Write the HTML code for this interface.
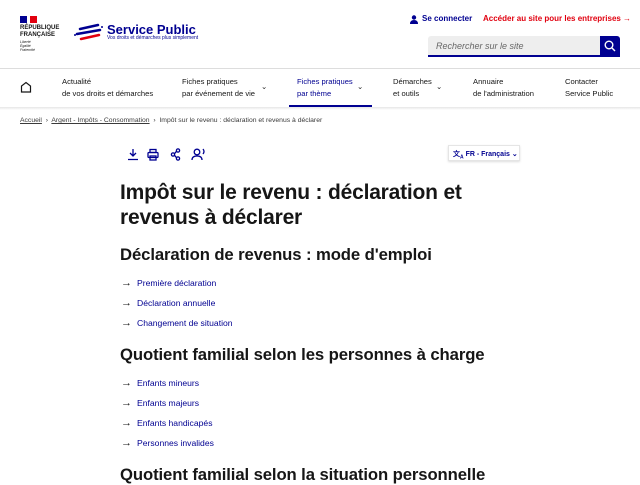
<!DOCTYPE html><html><head><meta charset="utf-8"><style>
*{margin:0;padding:0;box-sizing:border-box}
body{width:640px;height:480px;overflow:hidden;background:#fff;font-family:"Liberation Sans",sans-serif;color:#161616;position:relative}
.a{position:absolute;white-space:nowrap}
.nav{font-size:7.6px;line-height:12px;color:#161616}
.lnk{font-size:8.6px;color:#000091}
.lnk b{font-size:11px;color:#161616;display:inline-block;width:16px;line-height:9px}
.h2{font-size:16.7px;font-weight:bold;letter-spacing:-0.1px}
</style></head><body>
<div class="a" style="left:20px;top:16px;width:7px;height:7px;background:#000091"></div>
<div class="a" style="left:30px;top:16px;width:7px;height:7px;background:#e1000f"></div>
<div class="a" style="left:20px;top:25px;font-size:6px;font-weight:bold;line-height:6.5px">RÉPUBLIQUE<br>FRANÇAISE</div>
<div class="a" style="left:20px;top:40px;font-size:3.5px;font-style:italic;line-height:4px">Liberté<br>Égalité<br>Fraternité</div>
<svg class="a" style="left:74px;top:22px" width="30" height="22" viewBox="0 0 30 22"><path d="M6 7 L24 3" stroke="#000091" stroke-width="2.5" stroke-linecap="round"/><path d="M3 12 L26 8" stroke="#000091" stroke-width="2.5" stroke-linecap="round"/><path d="M7 17 L25 13" stroke="#e1000f" stroke-width="2.5" stroke-linecap="round"/><circle cx="28" cy="5" r="1" fill="#000091"/><circle cx="1" cy="13" r="1" fill="#000091"/></svg>
<div class="a" style="left:107px;top:22px;font-size:13px;font-weight:bold;color:#000091">Service Public</div>
<div class="a" style="left:107px;top:35px;font-size:5px;color:#000091">Vos droits et démarches plus simplement</div>
<svg class="a" style="left:410px;top:15px" width="8" height="9" viewBox="0 0 8 9"><circle cx="4" cy="2.5" r="2.2" fill="#000091"/><path d="M0 9 Q0 5 4 5 Q8 5 8 9Z" fill="#000091"/></svg>
<div class="a" style="left:422px;top:14px;font-size:8px;font-weight:bold;color:#000091">Se connecter</div>
<div class="a" style="left:483px;top:14px;font-size:8px;font-weight:bold;color:#e1000f">Accéder au site pour les entreprises →</div>
<div class="a" style="left:428px;top:36px;width:172px;height:21px;background:#eee;border-bottom:2px solid #000091;border-radius:3px 0 0 0"></div>
<div class="a" style="left:436px;top:41px;font-size:9px;font-style:italic;color:#666">Rechercher sur le site</div>
<div class="a" style="left:600px;top:36px;width:20px;height:21px;background:#000091;border-radius:0 3px 0 0"></div>
<svg class="a" style="left:604px;top:40px" width="12" height="12" viewBox="0 0 12 12"><circle cx="5" cy="5" r="3.8" stroke="#fff" stroke-width="1.4" fill="none"/><path d="M8 8 L11 11" stroke="#fff" stroke-width="1.4"/></svg>
<div class="a" style="left:0;top:68px;width:640px;height:1px;background:#ddd"></div>
<svg class="a" style="left:20px;top:81px" width="12" height="12" viewBox="0 0 12 12"><path d="M1.5 11 V5 L6 1.5 L10.5 5 V11 Z" stroke="#161616" stroke-width="1.2" fill="none"/></svg>
<div class="a nav" style="left:62px;top:76px">Actualité<br>de vos droits et démarches</div>
<div class="a nav" style="left:182px;top:76px">Fiches pratiques<br>par événement de vie</div>
<div class="a nav" style="left:261px;top:81px">⌄</div>
<div class="a nav" style="left:297px;top:76px;color:#000091">Fiches pratiques<br>par thème</div>
<div class="a nav" style="left:357px;top:81px">⌄</div>
<div class="a" style="left:289px;top:105px;width:83px;height:2px;background:#000091"></div>
<div class="a nav" style="left:393px;top:76px">Démarches<br>et outils</div>
<div class="a nav" style="left:436px;top:81px">⌄</div>
<div class="a nav" style="left:473px;top:76px">Annuaire<br>de l'administration</div>
<div class="a nav" style="left:565px;top:76px">Contacter<br>Service Public</div>
<div class="a" style="left:0;top:107px;width:640px;height:3px;background:linear-gradient(#e6e6e6,#fff)"></div>
<div class="a" style="left:20px;top:117px;font-size:6.8px;color:#3a3a3a"><span style="text-decoration:underline">Accueil</span> &nbsp;›&nbsp; <span style="text-decoration:underline">Argent - Impôts - Consommation</span> &nbsp;›&nbsp; Impôt sur le revenu : déclaration et revenus à déclarer</div>
<svg class="a" style="left:127px;top:148px" width="80" height="13" viewBox="0 0 80 13" fill="none" stroke="#000091" stroke-width="1.3"><path d="M6 1 V8 M3 5 L6 8 L9 5 M1 11.5 H11"/><rect x="23" y="1.5" width="6" height="3"/><rect x="21" y="4.5" width="10" height="5" rx="1"/><rect x="23" y="8" width="6" height="4"/><circle cx="51" cy="2.5" r="1.6"/><circle cx="46" cy="6.5" r="1.6"/><circle cx="51" cy="10.5" r="1.6"/><path d="M47.5 5.7 L49.5 3.3 M47.5 7.3 L49.5 9.7"/><circle cx="70" cy="4" r="2.8"/><path d="M65 12 Q65 8 70 8 Q75 8 75 12 M76 1 Q78 3.5 76 6"/></svg>
<div class="a" style="left:448px;top:145px;width:72px;height:16px;border:1px solid #e5e5e5;box-shadow:0 1px 2px #ddd"></div>
<div class="a" style="left:453px;top:149px;font-size:7px;font-weight:bold;color:#000091">文<sub style="font-size:5px">A</sub> FR - Français ⌄</div>
<div class="a" style="left:120px;top:180px;font-size:21px;font-weight:bold;line-height:25px;letter-spacing:-0.2px">Impôt sur le revenu : déclaration et<br>revenus à déclarer</div>
<div class="a h2" style="left:120px;top:245px">Déclaration de revenus : mode d'emploi</div>
<div class="a lnk" style="left:121px;top:278px"><b>→</b>Première déclaration</div>
<div class="a lnk" style="left:121px;top:298px"><b>→</b>Déclaration annuelle</div>
<div class="a lnk" style="left:121px;top:318px"><b>→</b>Changement de situation</div>
<div class="a h2" style="left:120px;top:345px">Quotient familial selon les personnes à charge</div>
<div class="a lnk" style="left:121px;top:378px"><b>→</b>Enfants mineurs</div>
<div class="a lnk" style="left:121px;top:398px"><b>→</b>Enfants majeurs</div>
<div class="a lnk" style="left:121px;top:418px"><b>→</b>Enfants handicapés</div>
<div class="a lnk" style="left:121px;top:438px"><b>→</b>Personnes invalides</div>
<div class="a h2" style="left:120px;top:465px">Quotient familial selon la situation personnelle</div>
</body></html>
